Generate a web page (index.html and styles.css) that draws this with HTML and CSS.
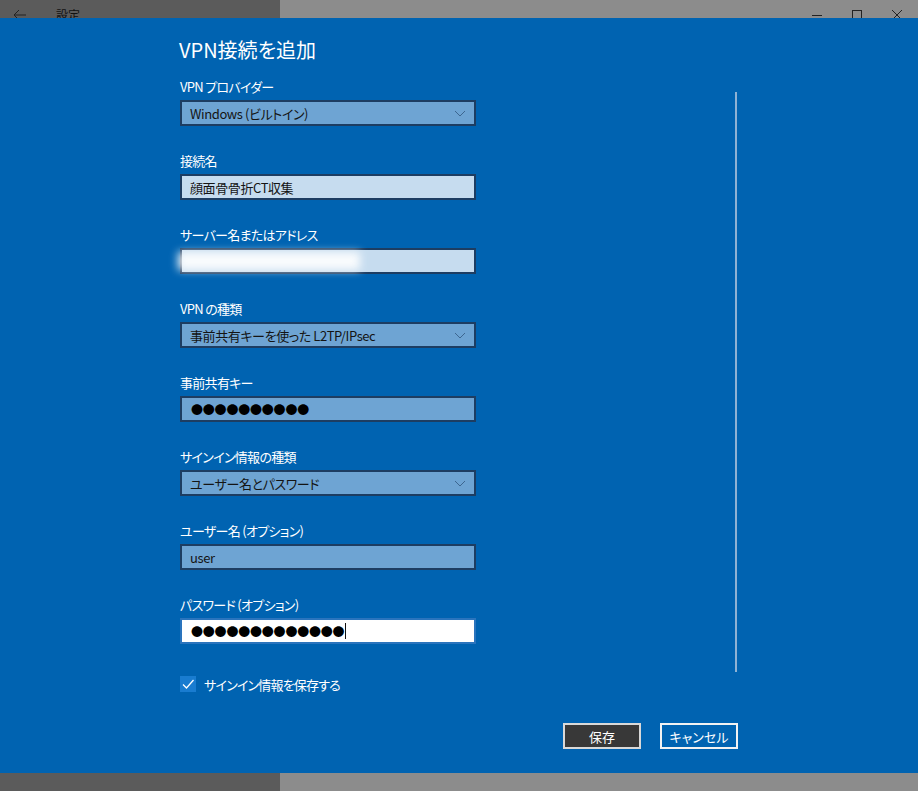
FILE: index.html
```html
<!DOCTYPE html>
<html lang="ja">
<head>
<meta charset="utf-8">
<title>設定</title>
<link rel="stylesheet" href="styles.css">
</head>
<body>
<div class="window">
  <div class="titlebar">
    <div class="tb-left">
      <svg class="back" width="14" height="12" viewBox="0 0 14 12"><path d="M6 1 L1 6 L6 11 M1 6 H13" fill="none" stroke="#222" stroke-width="1"/></svg>
      <span class="tb-title">設定</span>
    </div>
    <div class="tb-right">
      <svg class="ctl" width="12" height="12" viewBox="0 0 12 12"><path d="M1 6.5 H11" stroke="#222" stroke-width="1"/></svg>
      <svg class="ctl" width="12" height="12" viewBox="0 0 12 12"><rect x="1.5" y="1.5" width="9" height="9" fill="none" stroke="#222" stroke-width="1"/></svg>
      <svg class="ctl" width="12" height="12" viewBox="0 0 12 12"><path d="M1 1 L11 11 M11 1 L1 11" stroke="#222" stroke-width="1"/></svg>
    </div>
  </div>

  <div class="dialog">
    <div class="pane">
      <div class="main">
        <div class="form">
          <h1 class="title">VPN接続を追加</h1>

          <div class="field">
            <div class="label">VPN プロバイダー</div>
            <div class="box select"><span>Windows (ビルトイン)</span>
              <svg class="chev" width="12" height="7" viewBox="0 0 12 7"><polyline points="1,1 6,6 11,1" fill="none" stroke="#3d668f" stroke-width="1"/></svg>
            </div>
          </div>

          <div class="field">
            <div class="label">接続名</div>
            <div class="box light"><span>顔面骨骨折CT収集</span></div>
          </div>

          <div class="field">
            <div class="label">サーバー名またはアドレス</div>
            <div class="box light blurred"><span class="blur"></span></div>
          </div>

          <div class="field">
            <div class="label">VPN の種類</div>
            <div class="box select"><span>事前共有キーを使った L2TP/IPsec</span>
              <svg class="chev" width="12" height="7" viewBox="0 0 12 7"><polyline points="1,1 6,6 11,1" fill="none" stroke="#3d668f" stroke-width="1"/></svg>
            </div>
          </div>

          <div class="field">
            <div class="label">事前共有キー</div>
            <div class="box mid"><span class="dots">●●●●●●●●●●</span></div>
          </div>

          <div class="field">
            <div class="label">サインイン情報の種類</div>
            <div class="box select"><span>ユーザー名とパスワード</span>
              <svg class="chev" width="12" height="7" viewBox="0 0 12 7"><polyline points="1,1 6,6 11,1" fill="none" stroke="#3d668f" stroke-width="1"/></svg>
            </div>
          </div>

          <div class="field">
            <div class="label">ユーザー名 (オプション)</div>
            <div class="box mid"><span>user</span></div>
          </div>

          <div class="field last">
            <div class="label">パスワード (オプション)</div>
            <div class="box focus"><span class="dots">●●●●●●●●●●●●●</span><span class="caret"></span></div>
          </div>

          <div class="check">
            <span class="cbox"><svg width="16" height="16" viewBox="0 0 16 16"><polyline points="3,8.5 6.5,12 13.5,4" fill="none" stroke="#fff" stroke-width="1.3"/></svg></span>
            <span class="check-text">サインイン情報を保存する</span>
          </div>
        </div>
        <div class="scrollbar"></div>
      </div>
      <div class="actions">
        <button class="btn primary">保存</button>
        <button class="btn">キャンセル</button>
      </div>
    </div>
  </div>

  <div class="bottombar">
    <div class="bb-left"></div>
    <div class="bb-right"></div>
  </div>
</div>
</body>
</html>
```
FILE: styles.css
```css
html, body {
  margin: 0;
  padding: 0;
}
body {
  width: 918px;
  height: 791px;
  overflow: hidden;
  font-family: "Noto Sans CJK JP", "Noto Sans", sans-serif;
  font-feature-settings: "palt" 1;
}
.window {
  width: 918px;
  height: 791px;
  display: flex;
  flex-direction: column;
}
.titlebar {
  height: 18px;
  display: flex;
  overflow: hidden;
  flex: none;
}
.tb-left {
  width: 280px;
  background: #5b5b5b;
  display: flex;
  align-items: center;
  height: 29px;
  flex: none;
}
.back {
  margin-left: 13px;
}
.tb-title {
  margin-left: 29px;
  font-size: 12px;
  color: #111;
}
.tb-right {
  flex: 1;
  background: #8c8c8c;
  height: 29px;
  display: flex;
  align-items: center;
  justify-content: flex-end;
  gap: 28px;
  padding-right: 15px;
}
.ctl {
  display: block;
}
.dialog {
  flex: 1;
  background: #0063b1;
  padding: 18px 0 0 180px;
  box-sizing: border-box;
}
.pane {
  width: 558px;
  display: flex;
  flex-direction: column;
}
.main {
  display: flex;
  align-items: flex-start;
}
.form {
  width: 296px;
  display: flex;
  flex-direction: column;
}
.title {
  margin: 0 0 13px -1px;
  font-size: 20px;
  font-weight: normal;
  line-height: 28px;
  color: #fff;
}
.field {
  margin-bottom: 25px;
}
.field.last {
  margin-bottom: 30px;
}
.label {
  font-size: 13px;
  line-height: 20px;
  color: #fff;
  margin-bottom: 3px;
  letter-spacing: -0.7px;
}
.box {
  position: relative;
  height: 26px;
  box-sizing: border-box;
  border: 2px solid #1d3d62;
  padding: 0 8px;
  display: flex;
  align-items: center;
  font-size: 13px;
  letter-spacing: -0.4px;
  color: #141414;
}
.select, .mid {
  background: #6ea4d3;
}
.light {
  background: #c6dcef;
}
.focus {
  background: #fff;
  border-color: #2a74bd;
}
.chev {
  margin-left: auto;
}
.blur {
  position: absolute;
  left: -4px;
  top: 2px;
  width: 182px;
  height: 18px;
  background: #ffffff;
  filter: blur(4px);
  opacity: 0.9;
}
.dots {
  font-family: "Noto Sans CJK JP", sans-serif;
  font-feature-settings: normal;
  font-size: 12px;
  letter-spacing: -0.2px;
  color: #000;
  margin-left: 1px;
}
.caret {
  width: 1px;
  height: 16px;
  background: #111;
  margin-left: 1px;
}
.check {
  display: flex;
  align-items: center;
  height: 20px;
}
.cbox {
  width: 16px;
  height: 16px;
  background: #197cd0;
  display: block;
}
.cbox svg {
  display: block;
}
.check-text {
  margin-left: 8px;
  font-size: 13px;
  color: #fff;
  letter-spacing: -0.8px;
}
.scrollbar {
  margin-left: auto;
  margin-right: 1px;
  margin-top: 56px;
  width: 2px;
  height: 580px;
  background: #8fb2d4;
}
.actions {
  margin-top: 29px;
  display: flex;
  justify-content: flex-end;
  gap: 19px;
}
.btn {
  width: 78px;
  height: 26px;
  box-sizing: border-box;
  border: 2px solid #f2f2f2;
  background: transparent;
  color: #fff;
  font-family: "Noto Sans CJK JP", sans-serif;
  font-feature-settings: "palt" 1;
  font-size: 13px;
  padding: 0;
}
.btn.primary {
  background: #383838;
  border-color: #d9d9d9;
}
.bottombar {
  height: 18px;
  display: flex;
  flex: none;
}
.bb-left {
  width: 280px;
  background: #5b5b5b;
}
.bb-right {
  flex: 1;
  background: #8c8c8c;
}
```
